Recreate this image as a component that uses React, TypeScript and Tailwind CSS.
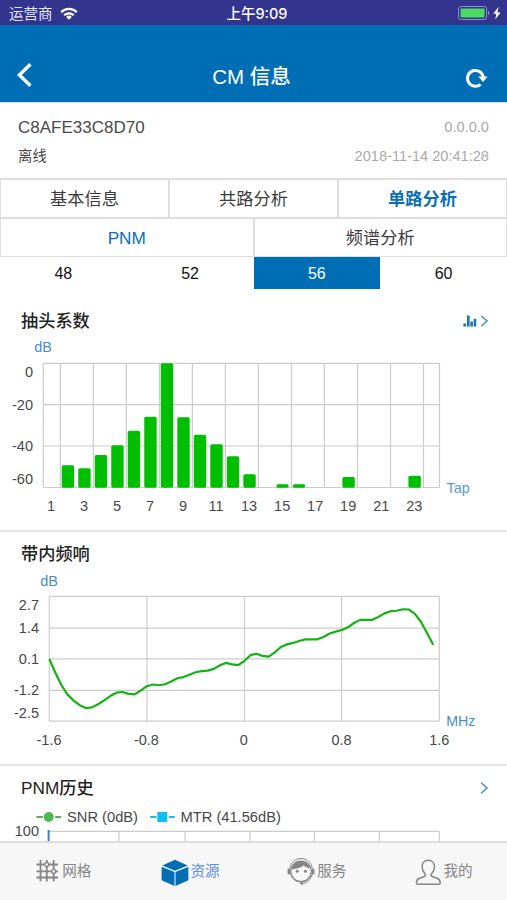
import React, { useState } from 'react';
import clsx from 'clsx';

const TAP_VALUES: (number | null)[] = [
    null, -49.2, -50.6, -44.3, -39.5, -32.5, -25.8, 0, -26, -34.5, -39, -44.8,
    -53.5, null, -58.3, -58.3, null, null, -54.9, null, null, null, -54.2, null,
];

// in-band response, one sample every 0.05 MHz starting at -1.6
const RESPONSE = [
    0.09, -0.48, -1.0, -1.39, -1.64, -1.83, -1.95, -1.92, -1.79, -1.63, -1.45, -1.31, -1.28, -1.36, -1.38, -1.22,
    -1.04, -0.97, -1.0, -0.96, -0.84, -0.71, -0.66, -0.56, -0.46, -0.41, -0.39, -0.32, -0.17, -0.07, -0.13, -0.16,
    0.01, 0.25, 0.31, 0.22, 0.19, 0.37, 0.59, 0.7, 0.76, 0.84, 0.91, 0.91, 0.91, 1.01, 1.15, 1.23,
    1.3, 1.41, 1.59, 1.72, 1.72, 1.72, 1.84, 1.99, 2.08, 2.1, 2.16, 2.15, 1.97, 1.63, 1.16, 0.68,
];

const StatusBar = () => (
    <div className="h-[25px] shrink-0 bg-[#33348e] text-white grid grid-cols-3 items-center pl-[9px] pr-[5px] pt-[3px] text-[14.5px] leading-none">
        <div className="flex items-center gap-[7px]">
            <span className="text-[#e4e6f6]">运营商</span>
            <svg width="18" height="13" viewBox="0 0 18 13" fill="none" stroke="#fff" strokeWidth="2.3" className="-mt-[2px]">
                <path d="M1.2 5.2a11 11 0 0 1 15.6 0" />
                <path d="M4.2 8.3a6.8 6.8 0 0 1 9.6 0" />
                <path d="M9 12.7 6.2 9.9a4 4 0 0 1 5.6 0Z" fill="#fff" stroke="none" />
            </svg>
        </div>
        <div className="text-center font-medium font-[Inter,'Noto_Sans_CJK_SC',sans-serif] text-[14.5px] pl-[3px]">上午9:09</div>
        <div className="flex items-center justify-end -mt-[2px]">
            <svg width="44" height="16" viewBox="0 0 44 16">
                <rect x=".6" y="1.5" width="28" height="13" rx="2.5" fill="none" stroke="#8f90c4" />
                <rect x="2.6" y="3.5" width="24" height="9" rx="1" fill="#4cd964" />
                <path d="M30 5.8a2.4 2.4 0 0 1 0 4.4Z" fill="#8f90c4" />
                <path d="M40.6 1.8 35.2 8.8h3.200l-1.200 5.600 5.400-7h-3.200Z" fill="#fff" />
            </svg>
        </div>
    </div>
);

const Header = () => (
    <header className="h-[78px] shrink-0 bg-[#006eb5] text-white flex items-end justify-between border-b border-[#d3dded] pl-4 pr-[19px]">
        <svg width="17" height="26" viewBox="0 0 17 26" className="mb-[14px]" fill="none" stroke="#fff" strokeWidth="3.4">
            <path d="M14.4 2.2 3.4 13l11 10.8" />
        </svg>
        <h1 className="text-[20.5px] leading-[30px] mb-[10px] ml-[4px]">CM <span className="font-medium">信息</span></h1>
        <svg width="22" height="22" viewBox="0 0 22 22" className="mb-[12px]" fill="none">
            <path d="M14.600 16.300A7.900 7.900 0 1 1 17.300 9.500" stroke="#fff" strokeWidth="3" />
            <path d="M12.300 8.600h9.400L17 14Z" fill="#fff" />
        </svg>
    </header>
);

const DeviceInfo = () => (
    <div className="h-[75px] shrink-0 px-[18px] pt-[13px] leading-[24px]">
        <div className="flex justify-between">
            <span className="text-[17px] text-[#4a4a4a]">C8AFE33C8D70</span>
            <span className="text-[14.6px] text-[#aaa] -mt-px">0.0.0.0</span>
        </div>
        <div className="flex justify-between mt-[4px]">
            <span className="text-[14.4px] text-[#4a4a4a]">离线</span>
            <span className="text-[14.6px] text-[#aaa]">2018-11-14 20:41:28</span>
        </div>
    </div>
);

interface TabsProps {
    items: string[];
    active: string;
    bold?: boolean;
    onChange: (item: string) => void;
}

const Tabs = ({ items, active, bold, onChange }: TabsProps) => (
    <div className="flex gap-[2px] px-[1px]">
        {items.map((item) => (
            <button
                key={item}
                onClick={() => onChange(item)}
                className={clsx(
                    'flex-1 h-[37px] pt-[2px] bg-white text-[17.2px] leading-none',
                    item === active ? 'text-[#0a6fb6]' : 'text-[#3c3c3c]',
                    item === active && bold && 'font-bold',
                )}
            >
                {item}
            </button>
        ))}
    </div>
);

const Chevron = () => (
    <svg width="9" height="14" viewBox="0 0 9 14" fill="none" stroke="#3d8fc9" strokeWidth="1.5">
        <path d="M1.2 1.8 7 7l-5.8 5.2" />
    </svg>
);

const TapChart = () => {
    const step = 16.51;
    return (
        <svg width="507" height="195" viewBox="0 335 507 195" fontSize="14.5" fill="#484848">
            <g stroke="#ccc" strokeWidth="1.2">
                {[363.3, 404.6, 446, 487.5].map((y) => <line key={y} x1="43.3" x2="439.5" y1={y} y2={y} />)}
                {[43.3, ...Array.from({ length: 12 }, (_, i) => 60.3 + i * step * 2), 439.5].map((x) => (
                    <line key={x} x1={x} x2={x} y1="363.3" y2="487.5" />
                ))}
            </g>
            {TAP_VALUES.map((v, i) => {
                if (v === null) return null;
                const h = ((60 + v) / 60) * 124.5;
                return <rect key={i} x={45.2 + i * step} y={487.7 - h} width="12.4" height={h} rx="1.6" fill="#00bf00" />;
            })}
            <text x="34.3" y="352" fill="#4a8dc6">dB</text>
            <text x="446.5" y="493.3" fill="#5b9aca">Tap</text>
            <g textAnchor="end">
                <text x="33" y="376.8">0</text>
                <text x="33" y="410">-20</text>
                <text x="33" y="451.4">-40</text>
                <text x="33" y="484.4">-60</text>
            </g>
            <g textAnchor="middle">
                {TAP_VALUES.map((_, i) => i % 2 === 0 && (
                    <text key={i} x={51 + i * step} y="511.3">{i + 1}</text>
                ))}
            </g>
        </svg>
    );
};

const ResponseChart = () => {
    const points = RESPONSE.map((v, i) => `${49.3 + i * 6.094},${596.3 + ((2.7 - v) / 5.2) * 125}`).join(' ');
    return (
        <svg width="507" height="196" viewBox="0 568 507 196" fontSize="14.5" fill="#484848">
            <g stroke="#ccc" strokeWidth="1.2">
                {[596.4, 628.2, 658.8, 690.4, 721.2].map((y) => <line key={y} x1="49.3" x2="439.3" y1={y} y2={y} />)}
                {[49.3, 147, 244.5, 341.5, 439.3].map((x) => <line key={x} x1={x} x2={x} y1="596.4" y2="721.2" />)}
            </g>
            <polyline points={points} fill="none" stroke="#12b312" strokeWidth="2.2" strokeLinejoin="round" />
            <text x="40.3" y="585.6" fill="#4a8dc6">dB</text>
            <text x="446.3" y="726.2" fontSize="14.2" fill="#4a8dc6">MHz</text>
            <g textAnchor="end">
                <text x="39" y="610.2">2.7</text>
                <text x="39" y="633">1.4</text>
                <text x="39" y="664.2">0.1</text>
                <text x="39" y="695.2">-1.2</text>
                <text x="39" y="718">-2.5</text>
            </g>
            <g textAnchor="middle">
                <text x="49" y="744.8">-1.6</text>
                <text x="146.4" y="744.8">-0.8</text>
                <text x="243.7" y="744.8">0</text>
                <text x="341.5" y="744.8">0.8</text>
                <text x="439.3" y="744.8">1.6</text>
            </g>
        </svg>
    );
};

const HistoryChart = () => (
    <svg width="507" height="35" viewBox="0 806 507 35" fontSize="14.5" fill="#484848">
        <g stroke="#ccc" strokeWidth="1.2">
            <line x1="49" x2="439.3" y1="831.4" y2="831.4" />
            {[119, 185, 250, 314.5, 379.3, 439.3].map((x) => <line key={x} x1={x} x2={x} y1="831.4" y2="845" />)}
        </g>
        <rect x="47.6" y="830" width="2" height="12" fill="#3c82bf" />
        <path d="M36.5 816.9h6.3m12.4 0h5.8" stroke="#52b552" strokeWidth="2" />
        <circle cx="48.7" cy="817" r="5" fill="#52b552" />
        <path d="M150.2 816.9h6.3m12.3 0h5.8" stroke="#12bff5" strokeWidth="2" />
        <rect x="157.3" y="812" width="10" height="10" fill="#12bff5" />
        <text x="67" y="822" fontSize="14.7">SNR (0dB)</text>
        <text x="180.5" y="822" fontSize="14.7">MTR (41.56dB)</text>
        <text x="39" y="836" textAnchor="end">100</text>
    </svg>
);

const navItems = [
    {
        label: '网格',
        icon: (
            <svg width="25" height="25" viewBox="0 0 25 25" fill="none" stroke="#858585" strokeWidth="1.8" className="relative -top-px">
                <path d="M5.5 2v21.500M11.800 2v2.600M11.800 8.400v15.100M18.700 2v9.500M18.700 15.300v8.200M1.500 6.500h8M13.800 6.500h9.200M1.500 13.400h15.200M20.600 13.400H23M1.500 19.500H23" />
                <circle cx="11.700" cy="6.500" r="2" strokeWidth="1.300" />
                <circle cx="18.700" cy="13.400" r="2" strokeWidth="1.300" />
            </svg>
        ),
    },
    {
        label: '资源',
        icon: (
            <svg width="28" height="28" viewBox="0 0 28 28" fill="#006eb5" className="relative top-px">
                <path d="M14 .8 26.7 6.5 14 11.8 1.3 6.5Z" />
                <path d="M.6 7.7 13.5 13v14L.6 21.2Z" />
                <path d="M27.4 7.7 14.500 13v14l12.900-5.800Z" />
            </svg>
        ),
    },
    {
        label: '服务',
        icon: (
            <svg width="28" height="28" viewBox="0 0 28 28" fill="none" stroke="#858585" className="relative -top-px">
                <circle cx="14" cy="14.400" r="10.300" strokeWidth="1.300" />
                <path d="M2.600 11.500C3.800 5.500 8.400 1.500 14 1.500s10.200 4 11.400 10M25.300 17.500C24 22.500 20 26 15.600 26.700" strokeWidth="1" />
                <path d="M4.800 12.300C5.600 7.800 9 4.500 14 4.500c3.600 0 7.400 2.400 8.900 6.200-2.600-.2-4.600-1-6.400-2.700-2.200 2.600-6.500 3-11.700 4.300Z" fill="#858585" strokeWidth=".6" />
                <path d="M1.800 11.800v5.400M26.200 11.800v5.400" strokeWidth="2.400" />
                <circle cx="10.200" cy="14.300" r="1.500" fill="#858585" stroke="none" />
                <circle cx="18.400" cy="14.300" r="1.500" fill="#858585" stroke="none" />
                <circle cx="14.500" cy="26.300" r="1.400" fill="#858585" stroke="none" />
            </svg>
        ),
    },
    {
        label: '我的',
        icon: (
            <svg width="27" height="28" viewBox="0 0 27 28" fill="none" stroke="#858585" strokeWidth="1.500" strokeLinejoin="round">
                <path d="M13.300 2.300c-4 0-6.200 2.800-6.200 6.500 0 2.800 1.200 5.300 3 7.200.8 1 .4 2-.8 2.500L4 20.500c-1.800.8-2.600 2-2.600 4.500 0 1 .5 1.300 1.400 1.300h21c.9 0 1.400-.3 1.400-1.300 0-2.500-.8-3.700-2.600-4.500l-5.300-2c-1.200-.5-1.600-1.500-.8-2.500 1.800-1.900 3-4.400 3-7.200 0-3.700-2.200-6.500-6.200-6.500Z" />
            </svg>
        ),
    },
];

const App = () => {
    const [page, setPage] = useState('单路分析');
    const [view, setView] = useState('PNM');
    const [channel, setChannel] = useState('56');
    const [nav, setNav] = useState('资源');

    return (
        <div className="w-[507px] h-[900px] flex flex-col overflow-hidden bg-white font-['Liberation_Sans','Noto_Sans_CJK_SC',sans-serif]">
            <StatusBar />
            <Header />
            <DeviceInfo />

            <div className="shrink-0 bg-[#dedede] pt-[2px] pb-[1px] flex flex-col gap-[2px]">
                <Tabs items={['基本信息', '共路分析', '单路分析']} active={page} bold onChange={setPage} />
                <Tabs items={['PNM', '频谱分析']} active={view} onChange={setView} />
            </div>

            <div className="shrink-0 h-[32px] flex">
                {['48', '52', '56', '60'].map((item) => (
                    <button
                        key={item}
                        onClick={() => setChannel(item)}
                        className={clsx('flex-1 pt-px text-[16px] leading-none', item === channel ? 'bg-[#006eb5] text-white' : 'text-[#111]')}
                    >
                        {item}
                    </button>
                ))}
            </div>

            <main className="flex-1 min-h-0 overflow-hidden">
                <section className="border-b-2 border-[#e6e6e6]">
                    <div className="h-[46px] pt-[17px] pl-[21px] pr-[18px] flex items-center justify-between">
                        <h2 className="pt-[2px] text-[17.2px] leading-none font-medium text-[#222]">抽头系数</h2>
                        <div className="flex items-center gap-[3px]">
                            <svg width="14" height="12" viewBox="0 0 14 12" fill="#1a73b8">
                                <path d="M.4 8.400h2.600v3H.4zM4 .6h2.600v10.800H4zM7.400 6.400h2.500v5H7.400zM10.700 3.800h2.500v7.600h-2.500z" />
                            </svg>
                            <Chevron />
                        </div>
                    </div>
                    <TapChart />
                </section>

                <section className="border-b-2 border-[#e6e6e6]">
                    <div className="h-[36px] pt-[10px] pl-[21px] flex items-center">
                        <h2 className="text-[17.2px] leading-none font-medium text-[#222]">带内频响</h2>
                    </div>
                    <ResponseChart />
                </section>

                <section>
                    <div className="h-[40px] pt-[3px] pl-[21px] pr-[18px] flex items-center justify-between">
                        <h2 className="pt-[2px] text-[17.2px] leading-none text-[#222]">PNM<span className="font-medium">历史</span></h2>
                        <Chevron />
                    </div>
                    <HistoryChart />
                </section>
            </main>

            <nav className="h-[59px] shrink-0 bg-[#f7f7f7] border-t-2 border-[#dcdcdc] flex">
                {navItems.map(({ label, icon }) => (
                    <button
                        key={label}
                        onClick={() => setNav(label)}
                        className={clsx('flex-1 flex items-center justify-center gap-[2px] text-[14.6px]', label === nav ? 'text-[#5b8def]' : 'text-[#858585]')}
                    >
                        {icon}
                        <span>{label}</span>
                    </button>
                ))}
            </nav>
        </div>
    );
};

export default App;
